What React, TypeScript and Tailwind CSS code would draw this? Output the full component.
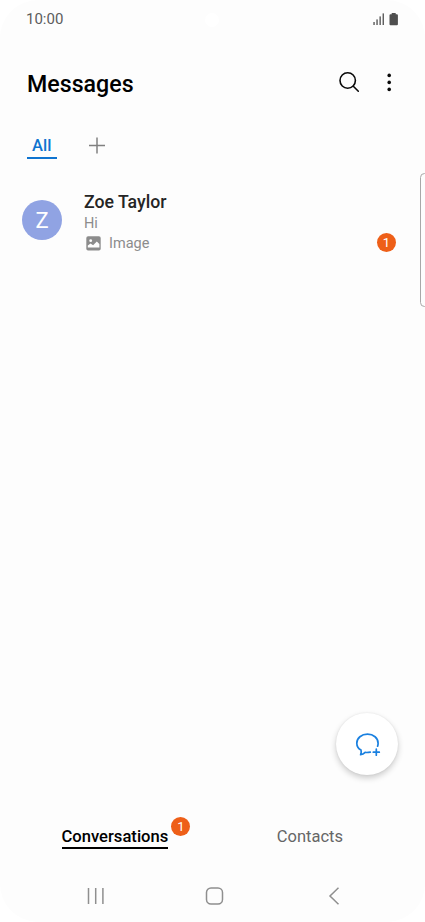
import { ReactNode } from 'react';
import clsx from 'clsx';

type Conversation = {
  id: number;
  name: string;
  preview: string;
  attachment?: string;
  unread: number;
};

const conversations: Conversation[] = [
  { id: 1, name: 'Zoe Taylor', preview: 'Hi', attachment: 'Image', unread: 1 },
];

function Badge({ children, className }: { children: ReactNode; className?: string }) {
  return (
    <span
      className={clsx(
        'flex h-[19px] w-[19px] items-center justify-center rounded-full bg-[#ee5f18] text-[13px] leading-none text-white',
        className
      )}
    >
      {children}
    </span>
  );
}

function StatusBar() {
  return (
    <div className="relative flex h-[38px] items-center justify-between pl-[26px] pr-[26px]">
      <span className="text-[15px] leading-none text-[#5c5c5c]">10:00</span>
      {/* camera cutout */}
      <span className="absolute left-[205px] top-[13px] h-[14px] w-[14px] rounded-full bg-white" />
      <svg width="27" height="14" viewBox="0 0 27 14" fill="#4f4f4f">
        <rect x="1.4" y="10" width="1.3" height="3" />
        <rect x="4.4" y="7.4" width="1.3" height="5.6" />
        <rect x="7.5" y="4.4" width="1.3" height="8.6" />
        <rect x="10.6" y="1.4" width="1.3" height="11.6" />
        <path d="M19.700 1h4v1.200h1.200a1 1 0 0 1 1 1v9a1 1 0 0 1-1 1h-6.400a1 1 0 0 1-1-1V3.200a1 1 0 0 1 1-1h1.200z" />
      </svg>
    </div>
  );
}

function Header() {
  return (
    <header className="flex h-[90px] items-center justify-between pl-[27px] pr-[30px]">
      <h1 className="pt-[4px] text-[23.2px] font-medium leading-none text-black">Messages</h1>
      <div className="flex items-center gap-[22px] pb-[2px]">
        <button type="button" aria-label="Search">
          <svg width="24" height="24" viewBox="0 0 24 24" fill="none" stroke="#0a0a0a" strokeWidth="1.6" strokeLinecap="round">
            <circle cx="10.7" cy="10.5" r="7.7" />
            <path d="M16.300 16.200l5 5" />
          </svg>
        </button>
        <button type="button" aria-label="More options">
          <svg width="12" height="24" viewBox="0 0 12 24" fill="#0a0a0a">
            <circle cx="6.2" cy="5.4" r="1.8" />
            <circle cx="6.2" cy="12.4" r="1.8" />
            <circle cx="6.2" cy="19.4" r="1.8" />
          </svg>
        </button>
      </div>
    </header>
  );
}

function ImageIcon() {
  return (
    <svg className="-mt-px" width="15" height="15" viewBox="0 0 15 15">
      <rect x="0.3" y="0.3" width="14.4" height="14.2" rx="1.8" fill="#8c8c8c" />
      <circle cx="4.7" cy="4.7" r="1.4" fill="#fdfdfd" />
      <path d="M1.800 11.500V9.600l2.800-2 2.500 1.600 3.700-3.700 2.600 2.600v3.400z" fill="#fdfdfd" />
    </svg>
  );
}

function ConversationRow({ item }: { item: Conversation }) {
  return (
    <li className="flex pl-[22px] pr-[29px]">
      <div className="mt-[9px] flex h-10 w-10 items-center justify-center rounded-full bg-[#90a3e3] pt-px text-[22px] leading-none text-white">
        {item.name[0]}
      </div>
      <div className="ml-[22px] flex-1">
        <p className="text-[17.7px] font-medium leading-[23px] text-[#252525]">{item.name}</p>
        <p className="text-[14.5px] leading-5 text-[#8c8c8c]">{item.preview}</p>
        {item.attachment && (
          <p className="flex items-center gap-2 pl-[2px] text-[14.5px] leading-5 text-[#8c8c8c]">
            <ImageIcon />
            {item.attachment}
          </p>
        )}
      </div>
      <Badge className="mt-[42px]">{item.unread}</Badge>
    </li>
  );
}

function NavigationBar() {
  return (
    <nav className="flex h-[51px] items-center justify-between pb-px pl-[86px] pr-[84px]">
      <svg width="19" height="18" viewBox="0 0 19 18" stroke="#8f8f8f" strokeWidth="1.5">
        <path d="M2.500 1v16M9.700 1v16M16.900 1v16" />
      </svg>
      <svg className="-ml-1" width="19" height="18" viewBox="0 0 19 18" fill="none" stroke="#8f8f8f" strokeWidth="1.5">
        <rect x="1.5" y="1" width="16" height="16" rx="4.5" />
      </svg>
      <svg width="13" height="18" viewBox="0 0 13 18" fill="none" stroke="#8f8f8f" strokeWidth="1.5">
        <path d="M10.500 0.800L2 9l8.500 8.200" />
      </svg>
    </nav>
  );
}

export default function App() {
  return (
    <div className="bg-white font-['Roboto',sans-serif]">
      <div className="relative flex h-[922px] w-[425px] flex-col overflow-hidden rounded-[38px] bg-[#fdfdfd]">
        <StatusBar />
        <Header />

        <div className="flex h-[63px] items-start pl-[26.5px] pt-[9px]">
          <button type="button" className="h-[22px] w-[30.5px] border-b-2 border-[#0f74d0] pb-[3px] text-[16.5px] font-medium leading-[15px] text-[#0f74d0]">
            All
          </button>
          <button type="button" aria-label="Add category" className="ml-8">
            <svg width="16" height="18" viewBox="0 0 16 18" stroke="#808080" strokeWidth="1.5">
              <path d="M0 8.500h16M8 0.500v16" />
            </svg>
          </button>
        </div>

        <ul className="flex-1">
          {conversations.map((item) => (
            <ConversationRow key={item.id} item={item} />
          ))}
        </ul>

        {/* edge panel handle */}
        <span className="absolute -right-1 top-[173px] h-[134px] w-[9px] rounded-[5px] border border-[#a8a8a8]" />

        <button
          type="button"
          aria-label="New message"
          className="absolute left-[336px] top-[713px] flex h-[62px] w-[62px] items-center justify-center rounded-full bg-white shadow-[0_3px_6px_rgba(0,0,0,0.2),0_0_2px_rgba(0,0,0,0.08)]"
        >
          <svg width="28" height="28" viewBox="0 0 28 28" fill="none" stroke="#1a80e0" strokeWidth="1.7" strokeLinecap="round" strokeLinejoin="round">
            <path d="M24.600 16.200c.3-.9.500-1.900.5-3 0-5.200-4.600-9-10.600-9s-10.700 3.800-10.700 9c0 3 1.500 5.300 4.200 6.900.5 1.400.3 2.800-.4 4.600 1.900-.2 3.300-1 4.500-2.300 1.700.2 3.200.1 5.200-.2" />
            <path d="M20.300 22.200h6M23.300 19.200v6" />
          </svg>
        </button>

        <div className="flex h-[54px] shrink-0 items-start">
          <div className="flex flex-1 pl-[61.5px]">
            <button type="button" className="relative h-[32px] border-b-2 border-black text-[16.6px] font-medium leading-[39px] text-black">
              Conversations
              <Badge className="absolute -right-[22px] top-0 font-normal">1</Badge>
            </button>
          </div>
          <button type="button" className="mr-[82px] text-[16.5px] leading-[39px] text-[#666]">
            Contacts
          </button>
        </div>

        <NavigationBar />
      </div>
    </div>
  );
}
